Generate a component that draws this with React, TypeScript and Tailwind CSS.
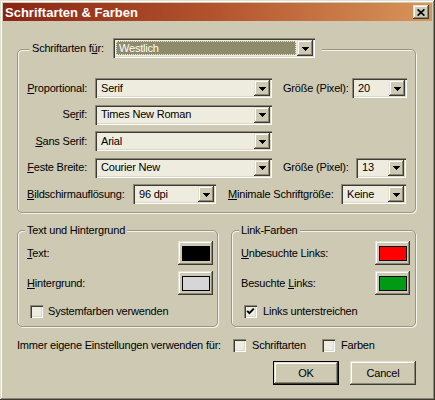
import React from "react";

const FACE = "bg-[#cdc9b3]";
const SUNKEN =
  "shadow-[inset_1px_1px_0_#8c8877,inset_2px_2px_0_#3c3a32,inset_-1px_-1px_0_#ffffff,inset_-2px_-2px_0_#dcd8c8]";
const RAISED =
  "shadow-[inset_-1px_-1px_0_#3c3a32,inset_1px_1px_0_#e4e0d0,inset_-2px_-2px_0_#8c8877,inset_2px_2px_0_#ffffff]";
const GROUP =
  "rounded-[5px] border border-[#9a9682] shadow-[inset_1px_1px_0_#f4f2ea,1px_1px_0_#f4f2ea]";

function Arrow() {
  return (
    <svg width="7" height="4" viewBox="0 0 7 4" shapeRendering="crispEdges" className="mt-[1px]">
      <polygon points="0,0 7,0 3.5,4" fill="#000" />
    </svg>
  );
}

function Combo({
  className,
  text,
  selected = false,
}: {
  className: string;
  text: string;
  selected?: boolean;
}) {
  return (
    <div className={`h-[20px] p-[2px] flex bg-[#eeecdf] ${SUNKEN} ${className}`}>
      {selected ? (
        <div className="flex-1 flex p-[1px] bg-[#eeecdf]">
          <div className="flex-1 flex items-center pl-[2px] bg-[#8d8b6b] text-white border border-dotted border-[#e6e4d2]">
            {text}
          </div>
        </div>
      ) : (
        <div className="flex-1 flex items-center pl-[4px] whitespace-nowrap overflow-hidden">
          {text}
        </div>
      )}
      <div className={`w-[16px] h-[16px] flex items-center justify-center ${FACE} ${RAISED}`}>
        <Arrow />
      </div>
    </div>
  );
}

function Check({ checked = false }: { checked?: boolean }) {
  return (
    <div
      className={`w-[13px] h-[13px] shrink-0 flex items-center justify-center bg-[#eeecdf] ${SUNKEN}`}
    >
      {checked && (
        <svg width="13" height="13" viewBox="0 0 13 13">
          <path d="M3.2 5.8 L5.4 8.2 L9.8 3.6" stroke="#000" strokeWidth="1.9" fill="none" />
        </svg>
      )}
    </div>
  );
}

function ColorButton({ color }: { color: string }) {
  return (
    <div className={`w-[35px] h-[24px] flex items-center justify-center ${FACE} ${RAISED}`}>
      <div className={`w-[28px] h-[15px] border border-black ${color}`} />
    </div>
  );
}

function U({ children }: { children: React.ReactNode }) {
  return <span className="underline underline-offset-[1px]">{children}</span>;
}

export default function App() {
  return (
    <div
      className={`w-[435px] h-[400px] ${FACE} p-[3px] flex flex-col text-[11px] leading-[13px] tracking-[-0.2px] text-black font-['Liberation_Sans',Arial,sans-serif] shadow-[inset_-1px_-1px_0_#3c3a32,inset_1px_1px_0_#e4e0d0,inset_-2px_-2px_0_#8c8877,inset_2px_2px_0_#ffffff]`}
    >
      {/* title bar */}
      <div className="h-[18px] shrink-0 flex items-center justify-between pl-[2px] pr-[3px] bg-linear-to-r from-[#8a2414] via-[#b4542e] to-[#d8955a]">
        <span className="font-bold text-white text-[13px] tracking-normal">Schriftarten &amp; Farben</span>
        <div className={`w-[16px] h-[14px] flex items-center justify-center ${FACE} ${RAISED}`}>
          <svg width="8" height="7" viewBox="0 0 8 7">
            <path d="M0.6 0.4 L7.4 6.6 M7.4 0.4 L0.6 6.6" stroke="#000" strokeWidth="1.7" />
          </svg>
        </div>
      </div>

      <div className="flex flex-col pl-[14px] pr-[16px]">
        {/* fonts group */}
        <div className={`mt-[28px] pl-[9px] pb-[8px] flex flex-col ${GROUP}`}>
          <div className="-mt-[12px] ml-[2px] pl-[3px] pr-[7px] w-fit flex items-center bg-[#cdc9b3]">
            <span className="w-[81px]">
              Schriftarten f<U>ü</U>r:
            </span>
            <Combo className="w-[202px]" text="Westlich" selected />
          </div>

          <div className="mt-[20px] flex flex-col gap-[6.5px]">
            <div className="flex items-center">
              <span className="w-[60px] text-right whitespace-nowrap">
                <U>P</U>roportional:
              </span>
              <Combo className="ml-[8px] w-[177px]" text="Serif" />
              <span className="ml-[11px] w-[69px]">Größe (Pixel):</span>
              <Combo className="w-[55px]" text="20" />
            </div>
            <div className="flex items-center">
              <span className="w-[60px] text-right">
                Se<U>r</U>if:
              </span>
              <Combo className="ml-[8px] w-[177px]" text="Times New Roman" />
            </div>
            <div className="flex items-center">
              <span className="w-[60px] text-right whitespace-nowrap">
                <U>S</U>ans Serif:
              </span>
              <Combo className="ml-[8px] w-[177px]" text="Arial" />
            </div>
            <div className="flex items-center">
              <span className="w-[60px] text-right whitespace-nowrap">
                <U>F</U>este Breite:
              </span>
              <Combo className="ml-[8px] w-[177px]" text="Courier New" />
              <span className="ml-[11px] w-[73px]">Größe (Pixel):</span>
              <Combo className="w-[50px]" text="13" />
            </div>
            <div className="flex items-center">
              <span className="w-[106px] whitespace-nowrap">
                <U>B</U>ildschirmauflösung:
              </span>
              <Combo className="w-[83px]" text="96 dpi" />
              <span className="ml-[12px] w-[113px] whitespace-nowrap">
                <U>M</U>inimale Schriftgröße:
              </span>
              <Combo className="w-[65px]" text="Keine" />
            </div>
          </div>
        </div>

        {/* colour groups */}
        <div className="mt-[17px] flex gap-[13px]">
          <div className={`w-[201px] h-[97px] pl-[9px] pr-[4px] flex flex-col ${GROUP}`}>
            <span className="-mt-[7px] -ml-[2px] px-[2px] w-fit bg-[#cdc9b3]">
              Text und Hintergrund
            </span>
            <div className="mt-[4px] flex items-center justify-between">
              <span>
                <U>T</U>ext:
              </span>
              <ColorButton color="bg-black" />
            </div>
            <div className="mt-[6px] flex items-center justify-between">
              <span>
                <U>H</U>intergrund:
              </span>
              <ColorButton color="bg-[#d6d6d6]" />
            </div>
            <div className="mt-[10px] ml-[3px] flex items-center gap-[5px]">
              <Check />
              <span>Systemfarben verwenden</span>
            </div>
          </div>

          <div className={`w-[185px] h-[97px] pl-[9px] pr-[5px] flex flex-col ${GROUP}`}>
            <span className="-mt-[7px] -ml-[2px] px-[2px] w-fit bg-[#cdc9b3]">Link-Farben</span>
            <div className="mt-[4px] flex items-center justify-between">
              <span>
                <U>U</U>nbesuchte Links:
              </span>
              <ColorButton color="bg-[#ff0000]" />
            </div>
            <div className="mt-[6px] flex items-center justify-between">
              <span>
                Besuchte <U>L</U>inks:
              </span>
              <ColorButton color="bg-[#009a14]" />
            </div>
            <div className="mt-[10px] ml-[3px] flex items-center gap-[6px]">
              <Check checked />
              <span>Links unterstreichen</span>
            </div>
          </div>
        </div>

        {/* always use own settings */}
        <div className="mt-[11px] flex items-center h-[14px]">
          <span className="w-[216px] whitespace-nowrap">Immer eigene Einstellungen verwenden für:</span>
          <Check />
          <span className="ml-[6px] w-[70px]">Schriftarten</span>
          <Check />
          <span className="ml-[6px]">Farben</span>
        </div>

        {/* buttons */}
        <div className="mt-[9px] flex justify-end gap-[11px]">
          <div className="w-[66px] h-[24px] border border-black">
            <div className={`w-full h-full flex items-center justify-center ${FACE} ${RAISED}`}>
              OK
            </div>
          </div>
          <div className={`w-[66px] h-[24px] flex items-center justify-center ${FACE} ${RAISED}`}>
            Cancel
          </div>
        </div>
      </div>
    </div>
  );
}
